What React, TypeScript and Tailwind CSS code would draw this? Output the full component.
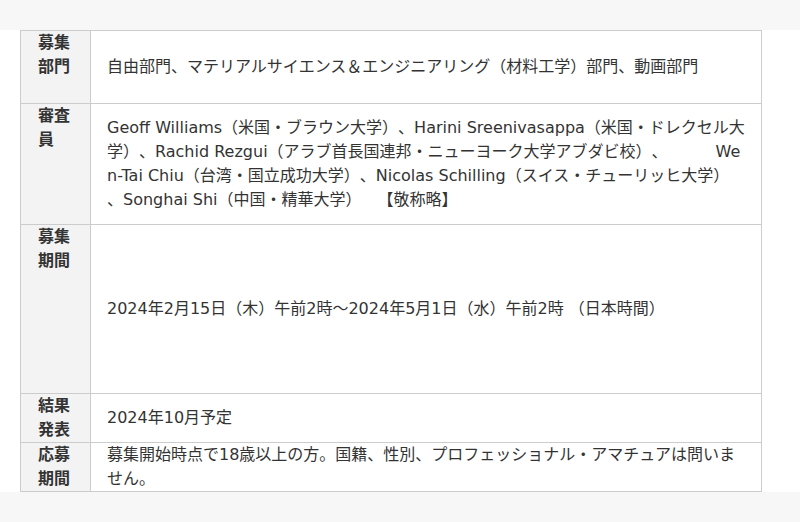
const rows: { head: string; height: string; body: React.ReactNode }[] = [
  {
    head: '募集部門',
    height: 'h-[73px]',
    body: '自由部門、マテリアルサイエンス＆エンジニアリング（材料工学）部門、動画部門',
  },
  {
    head: '審査員',
    height: 'h-[121px]',
    body: (
      <>
        Geoff Williams（米国・ブラウン大学）、Harini Sreenivasappa（米国・ドレクセル大
        <br />
        学）、Rachid Rezgui（アラブ首長国連邦・ニューヨーク大学アブダビ校）、　　　We
        <br />
        n-Tai Chiu（台湾・国立成功大学）、Nicolas Schilling（スイス・チューリッヒ大学）
        <br />
        、Songhai Shi（中国・精華大学）　【敬称略】
      </>
    ),
  },
  {
    head: '募集期間',
    height: 'h-[169px]',
    body: '2024年2月15日（木）午前2時～2024年5月1日（水）午前2時 （日本時間）',
  },
  {
    head: '結果発表',
    height: 'h-[49px]',
    body: '2024年10月予定',
  },
  {
    head: '応募期間',
    height: 'h-[49px]',
    body: (
      <>
        募集開始時点で18歳以上の方。国籍、性別、プロフェッショナル・アマチュアは問いま
        <br />
        せん。
      </>
    ),
  },
]

export default function App() {
  return (
    <div
      className="min-h-[522px] bg-[#f7f7f7] text-[16px] leading-[24px] text-[#333] [text-spacing-trim:space-all]"
      style={{ fontFamily: '"DejaVu Sans", "Noto Sans CJK JP", sans-serif' }}
    >
      <div className="h-[30px]" />
      <div className="bg-white px-[20px]">
        {/* entry details table */}
        <div className="w-[742px] border-t border-l border-r border-[#cccccc]">
          {rows.map((r) => (
            <div key={r.head} className={`flex border-b border-[#cccccc] ${r.height}`}>
              <div className="w-[70px] shrink-0 border-r border-[#cccccc] bg-[#f3f3f3] pl-[17px] pr-[17px] font-bold">
                {r.head}
              </div>
              <div className="flex flex-1 items-center whitespace-nowrap pl-[16px] pr-[12px]">
                <div>{r.body}</div>
              </div>
            </div>
          ))}
        </div>
      </div>
    </div>
  )
}
